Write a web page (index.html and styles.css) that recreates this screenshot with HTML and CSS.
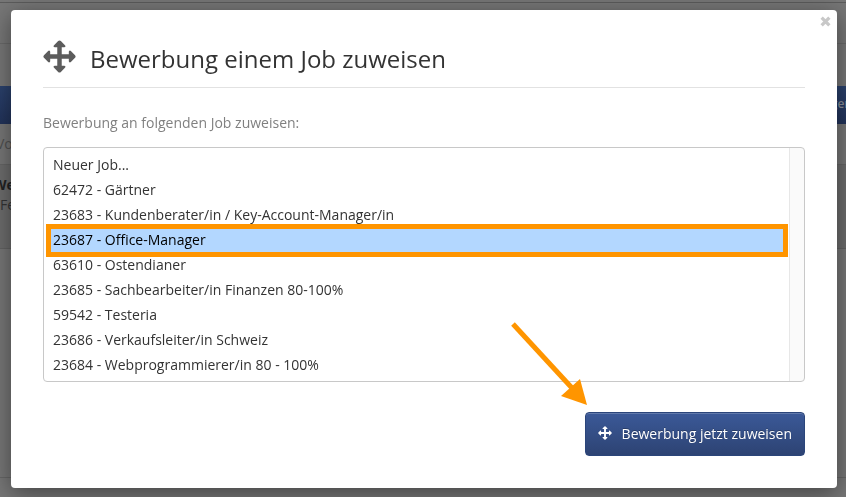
FILE: index.html
```
<!DOCTYPE html>
<html lang="de">
    <head>
        <meta charset="UTF-8" />
        <meta name="viewport" content="width=device-width, initial-scale=1.0" />
        <title>Bewerbung einem Job zuweisen</title>
        <link rel="stylesheet" href="styles.css">
    </head>
    <body>
        <svg class="sprite" aria-hidden="true">
            <symbol id="icon-move" viewBox="0 0 34 34">
                <path d="M17 .5q.8 0 1.400.6l4.200 4.200q.9.900.4 1.600-.3.500-1 .500H19.300V14.700H26.600V12q0-.7.6-1 .8-.4 1.500.3l4.300 4.300q.6.600.6 1.400t-.6 1.400l-4.300 4.300q-.7.700-1.500.3-.6-.3-.6-1V19.300H19.300V26.600H22q.7 0 1 .5.500.7-.4 1.600l-4.200 4.200q-.6.600-1.400.6t-1.400-.6l-4.200-4.200q-.9-.9-.4-1.600.3-.5 1-.5H14.700V19.300H7.400V22q0 .7-.6 1-.8.400-1.500-.3L1 18.400Q.4 17.800.4 17T1 15.600l4.300-4.300q.7-.7 1.500-.3.600.3.600 1V14.700H14.700V7.400H12q-.7 0-1-.5-.5-.7.400-1.600l4.200-4.200Q16.200.5 17 .5z" />
            </symbol>
        </svg>

        <!-- page behind the dialog -->
        <div class="page">
            <div class="page-top"></div>
            <div class="page-head"></div>
            <div class="page-space"></div>
            <div class="page-nav">gen</div>
            <div class="page-filter">Vor</div>
            <div class="page-row"><b>We</b><span>Fe</span></div>
            <div class="page-body"></div>
            <div class="page-foot"></div>
        </div>

        <div class="overlay">
            <form class="modal" role="dialog" aria-labelledby="modal-title">
                <button type="button" class="close" aria-label="Schliessen">
                    <svg viewBox="0 0 10 10"><path d="M1.500 1.500l7 7M8.500 1.500l-7 7" /></svg>
                </button>
                <header class="modal-header">
                    <svg class="title-icon" aria-hidden="true"><use href="#icon-move" /></svg>
                    <h1 id="modal-title">Bewerbung einem Job zuweisen</h1>
                </header>
                <label for="job">Bewerbung an folgenden Job zuweisen:</label>
                <div class="job-list">
                    <select id="job" name="job" size="9">
                        <option>Neuer Job...</option>
                        <option>62472 - Gärtner</option>
                        <option>23683 - Kundenberater/in / Key-Account-Manager/in</option>
                        <option selected>23687 - Office-Manager</option>
                        <option>63610 - Ostendianer</option>
                        <option>23685 - Sachbearbeiter/in Finanzen 80-100%</option>
                        <option>59542 - Testeria</option>
                        <option>23686 - Verkaufsleiter/in Schweiz</option>
                        <option>23684 - Webprogrammierer/in 80 - 100%</option>
                    </select>
                    <div class="marker"></div>
                </div>
                <footer class="modal-footer">
                    <button type="submit" class="submit">
                        <svg aria-hidden="true"><use href="#icon-move" /></svg>
                        Bewerbung jetzt zuweisen
                    </button>
                    <svg class="arrow" viewBox="0 0 78 84" aria-hidden="true">
                        <path class="arrow-line" d="M3 2L62 66" />
                        <path class="arrow-head" d="M77 83L70 57 51 74z" />
                    </svg>
                </footer>
            </form>
        </div>
    </body>
</html>
```

FILE: styles.css
```
* {
    box-sizing: border-box;
}
body {
    margin: 0;
    font-family: "Open Sans", sans-serif;
    font-size: 14px;
    color: #333;
}
.sprite {
    display: none;
}

/* page behind the dialog */
.page {
    display: flex;
    flex-direction: column;
    height: 100vh;
    overflow: hidden;
    background: #777;
    line-height: 20px;
}
.page-top {
    height: 3px;
    border-bottom: 1px solid #5c5c5c;
}
.page-head {
    height: 41px;
    border-bottom: 1px solid #6a6a6a;
}
.page-space {
    height: 42px;
}
.page-nav {
    height: 38px;
    padding-top: 8px;
    margin-right: -6px;
    text-align: right;
    font-weight: 600;
    font-size: 12px;
    color: #8a8f99;
    background: linear-gradient(#2b426e, #22335a);
}
.page-filter {
    height: 41px;
    padding-top: 10px;
    margin-left: -4px;
    color: #505050;
    border-bottom: 1px solid #666;
}
.page-row {
    display: flex;
    flex-direction: column;
    height: 84px;
    padding-top: 10px;
    background: #6d6d6d;
    color: #333;
    border-bottom: 1px solid #636363;
}
.page-row b {
    margin-left: -7px;
    color: #222;
}
.page-body {
    flex: 1;
}
.page-foot {
    height: 20px;
    border-top: 1px solid #666;
}

.overlay {
    position: fixed;
    inset: 0;
    padding: 10px 9px 9px 11px;
}
.modal {
    position: relative;
    padding: 29px 32px 32px;
    background: #fff;
    border-radius: 4px;
    box-shadow: 0 5px 24px rgba(0, 0, 0, 0.45);
}
.modal-header {
    display: flex;
    align-items: center;
    gap: 14px;
    height: 49px;
    padding-bottom: 13px;
    border-bottom: 1px solid #e2e2e2;
}
.modal-header h1 {
    margin: 0;
    padding-top: 4px;
    font-size: 24px;
    line-height: 34px;
    font-weight: 400;
}
.title-icon {
    width: 33px;
    height: 33px;
    fill: #5c5c5c;
}
.modal label {
    display: block;
    margin: 25px 0 14px;
    line-height: 20px;
    color: #808080;
}
.close {
    position: absolute;
    top: 6px;
    right: 6px;
    padding: 0;
    width: 11px;
    height: 11px;
    border: none;
    background: none;
    cursor: pointer;
}
.close svg {
    display: block;
    width: 11px;
    height: 11px;
    fill: none;
    stroke: #c8c8c8;
    stroke-width: 3;
}

.job-list {
    position: relative;
}
.job-list select {
    display: block;
    width: 100%;
    height: 235px;
    padding: 4px 20px 4px 7px;
    border: 1px solid #c8c8c8;
    border-radius: 4px;
    outline: none;
    font-family: inherit;
    font-size: 14px;
    color: #333;
    background: linear-gradient(90deg, #e7e7e7 1px, #fafafa 1px) right / 15px 100% no-repeat #fff;
    scrollbar-width: none;
}
.job-list option {
    min-height: 25px;
    padding: 3px 2px;
}
.job-list option:checked {
    color: #000;
    background: #b3d7ff;
}
/* frame round the selected job */
.marker {
    position: absolute;
    top: 77px;
    left: 3px;
    right: 17px;
    height: 33px;
    border: 5px solid #ff9500;
    pointer-events: none;
}

.modal-footer {
    position: relative;
    display: flex;
    justify-content: flex-end;
    margin-top: 30px;
}
.submit {
    display: flex;
    align-items: center;
    gap: 10px;
    height: 44px;
    padding: 0 12px 2px;
    border: 1px solid #2b457a;
    border-radius: 4px;
    font-family: inherit;
    font-size: 14px;
    color: #fff;
    text-shadow: 0 -1px 0 rgba(0, 0, 0, 0.25);
    background: linear-gradient(#3b5998, #2d4373);
    box-shadow: inset 0 1px 0 rgba(255, 255, 255, 0.2);
    cursor: pointer;
}
.submit svg {
    width: 14px;
    height: 14px;
    fill: #fff;
}
.arrow {
    position: absolute;
    right: 217px;
    bottom: 50px;
    width: 78px;
    height: 84px;
}
.arrow-line {
    stroke: #ff9500;
    stroke-width: 5;
}
.arrow-head {
    fill: #ff9500;
}
```
